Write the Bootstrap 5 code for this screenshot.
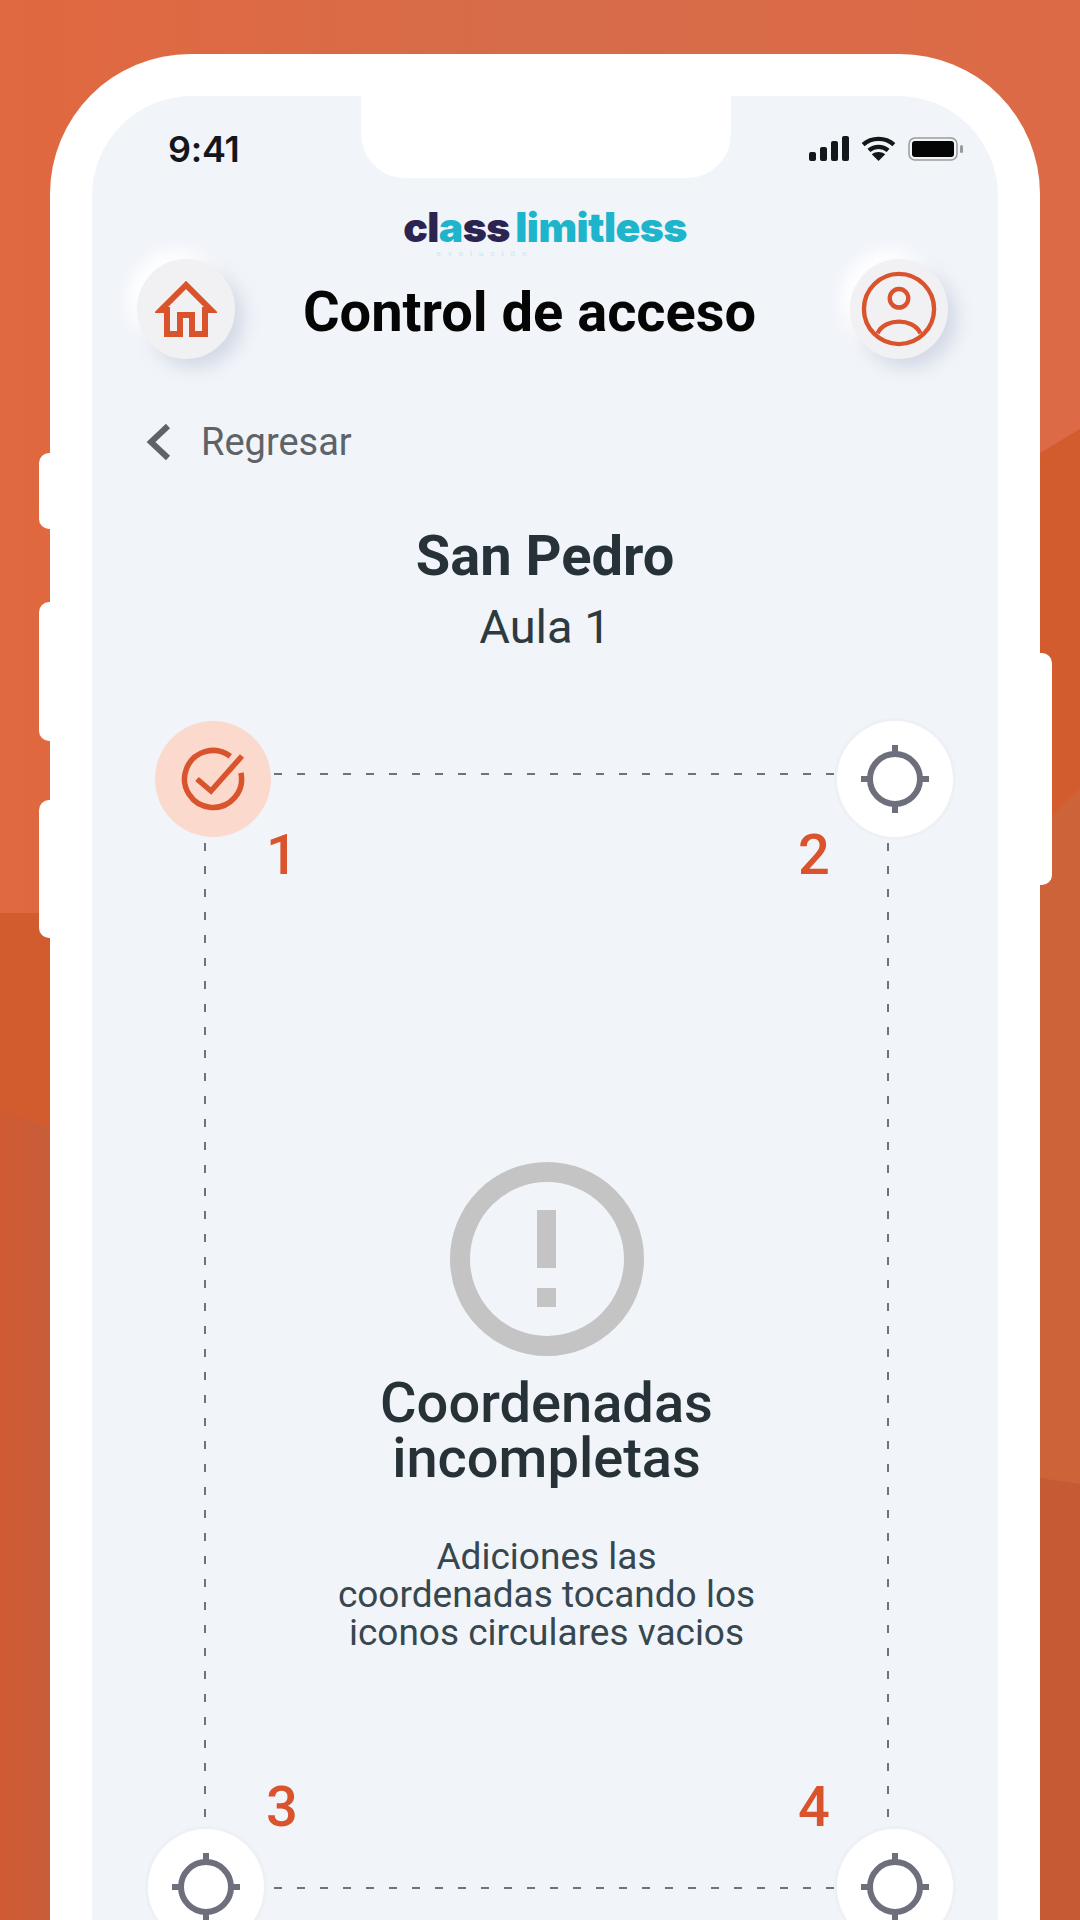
<!DOCTYPE html>
<html lang="en">
<head>
  <meta charset="UTF-8" />
  <title>Control de acceso</title>
  <link href="https://cdn.jsdelivr.net/npm/bootstrap@5.3.0/dist/css/bootstrap.min.css" rel="stylesheet" />
  <style>
    html, body { width: 1080px; height: 1920px; overflow: hidden; }
    body { font-family: Roboto, "Liberation Sans", sans-serif; background: #d25c2e; position: relative; }
    .backdrop { position: absolute; left: 0; top: 0; }
    .phone-shell { position: relative; margin: 54px 0 0 50px; width: 990px; height: 1900px; background: #fff; border-radius: 140px 140px 0 0; padding: 42px 42px 0 42px; }
    .side-key { position: absolute; background: #fff; width: 24px; }
    .key-a { left: -11px; top: 399px; height: 76px; border-radius: 10px 0 0 10px; }
    .key-b { left: -11px; top: 548px; height: 139px; border-radius: 10px 0 0 10px; }
    .key-c { left: -11px; top: 746px; height: 138px; border-radius: 10px 0 0 10px; }
    .key-d { right: -12px; top: 599px; height: 232px; border-radius: 0 10px 10px 0; }
    .phone-screen { position: relative; height: 1860px; background: #f1f4f9; border-radius: 100px 100px 0 0; overflow: hidden; }
    .notch-cut { position: absolute; left: 269px; top: 0; width: 370px; height: 82px; background: #fff; border-radius: 0 0 44px 44px; }
    .status-row { height: 111px; padding: 33px 34px 0 76px; }
    .status-icons { gap: 12px; margin-top: 7px; }
    .clock-text { font-family: Inter, sans-serif; font-weight: 600; font-size: 36px; line-height: 40px; color: #14171a; letter-spacing: -0.3px; }
    .brand-logo { font-family: Inter, sans-serif; font-weight: 900; font-size: 41px; line-height: 40px; letter-spacing: -0.6px; word-spacing: -2px; color: #1db4cc; }
    .brand-dark { color: #2b2350; }
    .brand-sub { font-size: 8px; line-height: 8px; letter-spacing: 7px; color: #c5e8ec; margin-top: 3px; padding-right: 120px; }
    .head-row { padding: 0 50px 0 45px; margin-top: 1px; }
    .soft-btn { width: 98px; height: 100px; border-radius: 50%; background: #f1f1f3; box-shadow: 9px 9px 16px rgba(165, 175, 200, .38), -9px -9px 16px #fff; }
    .page-title { font-weight: 700; font-size: 56px; line-height: 60px; color: #050505; margin: 5px 26px 0 0; }
    .back-row { margin: 61px 0 0 52px; color: #5f6368; font-size: 38px; line-height: 44px; gap: 29px; }
    .site-name { font-weight: 700; font-size: 56px; line-height: 60px; color: #263238; margin: 62px 0 0; }
    .room-name { font-size: 47px; line-height: 52px; color: #2d3a40; margin: 15px 0 0; }
    .geo-area { position: relative; height: 1230px; margin-top: 68px; }
    .geo-lines { position: absolute; left: 0; top: 0; }
    .pin-dot { position: absolute; width: 116px; height: 116px; border-radius: 50%; background: #fff; box-shadow: 0 0 0 3px #edf0f4; }
    .pin-done { left: 63px; top: 0; background: #fbd9cd; box-shadow: none; }
    .pin-two { left: 745px; top: 0; }
    .pin-three { left: 56px; top: 1108px; }
    .pin-four { left: 745px; top: 1108px; }
    .pin-num { position: absolute; font-size: 56px; line-height: 56px; font-weight: 500; color: #d9532c; }
    .num-one { left: 174px; top: 106px; }
    .num-two { left: 706px; top: 106px; }
    .num-three { left: 174px; top: 1058px; }
    .num-four { left: 706px; top: 1058px; }
    .empty-note { padding: 441px 0 0 3px; width: 560px; margin: 0 auto; }
    .note-title { font-weight: 500; font-size: 56px; line-height: 55px; color: #263238; margin: 20px 0 0; }
    .note-text { font-size: 37px; line-height: 38px; color: #37474f; margin: 52px 0 0; }
  </style>
</head>
<body>
  <svg class="backdrop" width="1080" height="1920" viewBox="0 0 1080 1920">
    <defs>
      <linearGradient id="topWash" x1="0" y1="0" x2="1" y2="0">
        <stop offset="0" stop-color="#e1683f" />
        <stop offset="0.5" stop-color="#d66c4a" />
        <stop offset="1" stop-color="#dd6a46" />
      </linearGradient>
      <linearGradient id="lowWash" x1="0" y1="0" x2="1" y2="0">
        <stop offset="0" stop-color="#d05a32" />
        <stop offset="0.05" stop-color="#c65e3b" />
        <stop offset="0.96" stop-color="#cd6338" />
        <stop offset="1" stop-color="#cd6338" />
      </linearGradient>
    </defs>
    <rect width="1080" height="1920" fill="#d25c2e" />
    <polygon points="0,0 1080,0 1080,429 1040,453 50,913 0,913" fill="url(#topWash)" />
    <polygon points="0,1109 50,1129 1040,827 1080,788 1080,1920 0,1920" fill="url(#lowWash)" />
    <polygon points="1040,1478 1080,1484 1080,1920 1040,1920" fill="#c65a35" />
  </svg>

  <div class="phone-shell">
    <div class="side-key key-a"></div>
    <div class="side-key key-b"></div>
    <div class="side-key key-c"></div>
    <div class="side-key key-d"></div>

    <div class="phone-screen">
      <div class="notch-cut"></div>

      <div class="status-row d-flex justify-content-between align-items-start">
        <span class="clock-text">9:41</span>
        <div class="status-icons d-flex align-items-center">
          <svg width="40" height="25" viewBox="0 0 40 25">
            <rect x="0" y="16" width="7" height="9" rx="2" fill="#14171a" />
            <rect x="11" y="11" width="7" height="14" rx="2" fill="#14171a" />
            <rect x="22" y="5" width="7" height="20" rx="2" fill="#14171a" />
            <rect x="33" y="0" width="7" height="25" rx="2" fill="#14171a" />
          </svg>
          <svg width="35" height="25" viewBox="0 0 36 26" fill="none" stroke="#14171a" stroke-width="4.5">
            <path d="M2 9c9-8 23-8 32 0" />
            <path d="M8 15c6-5 14-5 20 0" />
            <path d="M18 26l-7-7c4-3 10-3 14 0z" fill="#14171a" stroke="none" />
          </svg>
          <svg width="56" height="24" viewBox="0 0 56 24">
            <rect x="1" y="1" width="48" height="22" rx="6" fill="none" stroke="#9a9a9a" stroke-width="1.5" />
            <rect x="4" y="4" width="42" height="16" rx="3" fill="#050505" />
            <rect x="52" y="8" width="3" height="8" rx="1.5" fill="#9a9a9a" />
          </svg>
        </div>
      </div>

      <div class="text-center">
        <div class="brand-logo"><span class="brand-dark">cl</span>a<span class="brand-dark">ss</span> limitless</div>
        <div class="brand-sub">evolución</div>
      </div>

      <div class="head-row d-flex justify-content-between align-items-center">
        <div class="soft-btn d-flex align-items-center justify-content-center">
          <svg width="62" height="56" viewBox="0 0 62 56" fill="none" stroke="#d9532c" stroke-width="6">
            <path d="M31 4L6 29h6v24h13V34h12v19h13V29h6z" />
          </svg>
        </div>
        <h1 class="page-title">Control de acceso</h1>
        <div class="soft-btn d-flex align-items-center justify-content-center">
          <svg width="76" height="76" viewBox="0 0 78 78" fill="none" stroke="#d9532c" stroke-width="4.5">
            <circle cx="39" cy="39" r="36" />
            <circle cx="39" cy="28" r="9.5" />
            <path d="M17 64c4-9 14-12 22-12s18 3 22 12" />
          </svg>
        </div>
      </div>

      <div class="back-row d-flex align-items-center">
        <svg width="28" height="40" viewBox="0 0 28 40" fill="none" stroke="#5f6368" stroke-width="6">
          <path d="M24 4L7 20l17 16" />
        </svg>
        <span>Regresar</span>
      </div>

      <h2 class="site-name text-center">San Pedro</h2>
      <p class="room-name text-center">Aula 1</p>

      <div class="geo-area">
        <svg class="geo-lines" width="906" height="1230" viewBox="0 0 906 1230" fill="none" stroke="#6d7280" stroke-width="2" stroke-dasharray="8 15">
          <path d="M113 53H796" />
          <path d="M113 1167H796" />
          <path d="M113 53V1167" />
          <path d="M796 53V1167" />
        </svg>

        <div class="pin-dot pin-done d-flex align-items-center justify-content-center">
          <svg width="66" height="66" viewBox="0 0 66 66" fill="none" stroke="#d9532c" stroke-width="5.5">
            <path d="M60.9 26.9A28.5 28.5 0 1 1 50.3 10.3" />
            <path d="M17 33l14 12L62 10" />
          </svg>
        </div>
        <div class="pin-dot pin-two d-flex align-items-center justify-content-center">
          <svg width="70" height="70" viewBox="0 0 70 70" fill="none" stroke="#6e6f7c" stroke-width="6">
            <circle cx="35" cy="35" r="25" />
            <path d="M35 1v9M35 60v9M1 35h9M60 35h9" />
          </svg>
        </div>
        <div class="pin-dot pin-three d-flex align-items-center justify-content-center">
          <svg width="70" height="70" viewBox="0 0 70 70" fill="none" stroke="#6e6f7c" stroke-width="6">
            <circle cx="35" cy="35" r="25" />
            <path d="M35 1v9M35 60v9M1 35h9M60 35h9" />
          </svg>
        </div>
        <div class="pin-dot pin-four d-flex align-items-center justify-content-center">
          <svg width="70" height="70" viewBox="0 0 70 70" fill="none" stroke="#6e6f7c" stroke-width="6">
            <circle cx="35" cy="35" r="25" />
            <path d="M35 1v9M35 60v9M1 35h9M60 35h9" />
          </svg>
        </div>

        <span class="pin-num num-one">1</span>
        <span class="pin-num num-two">2</span>
        <span class="pin-num num-three">3</span>
        <span class="pin-num num-four">4</span>

        <div class="empty-note text-center">
          <svg class="d-block mx-auto" width="194" height="194" viewBox="0 0 194 194" fill="none">
            <circle cx="97" cy="97" r="87" stroke="#c4c4c4" stroke-width="20" />
            <rect x="87" y="48" width="19" height="58" fill="#c4c4c4" />
            <rect x="87" y="126" width="19" height="19" fill="#c4c4c4" />
          </svg>
          <h3 class="note-title">Coordenadas<br />incompletas</h3>
          <p class="note-text">Adiciones las<br />coordenadas tocando los<br />iconos circulares vacios</p>
        </div>
      </div>
    </div>
  </div>
  <script src="https://cdn.jsdelivr.net/npm/bootstrap@5.3.0/dist/js/bootstrap.bundle.min.js"></script>
</body>
</html>
